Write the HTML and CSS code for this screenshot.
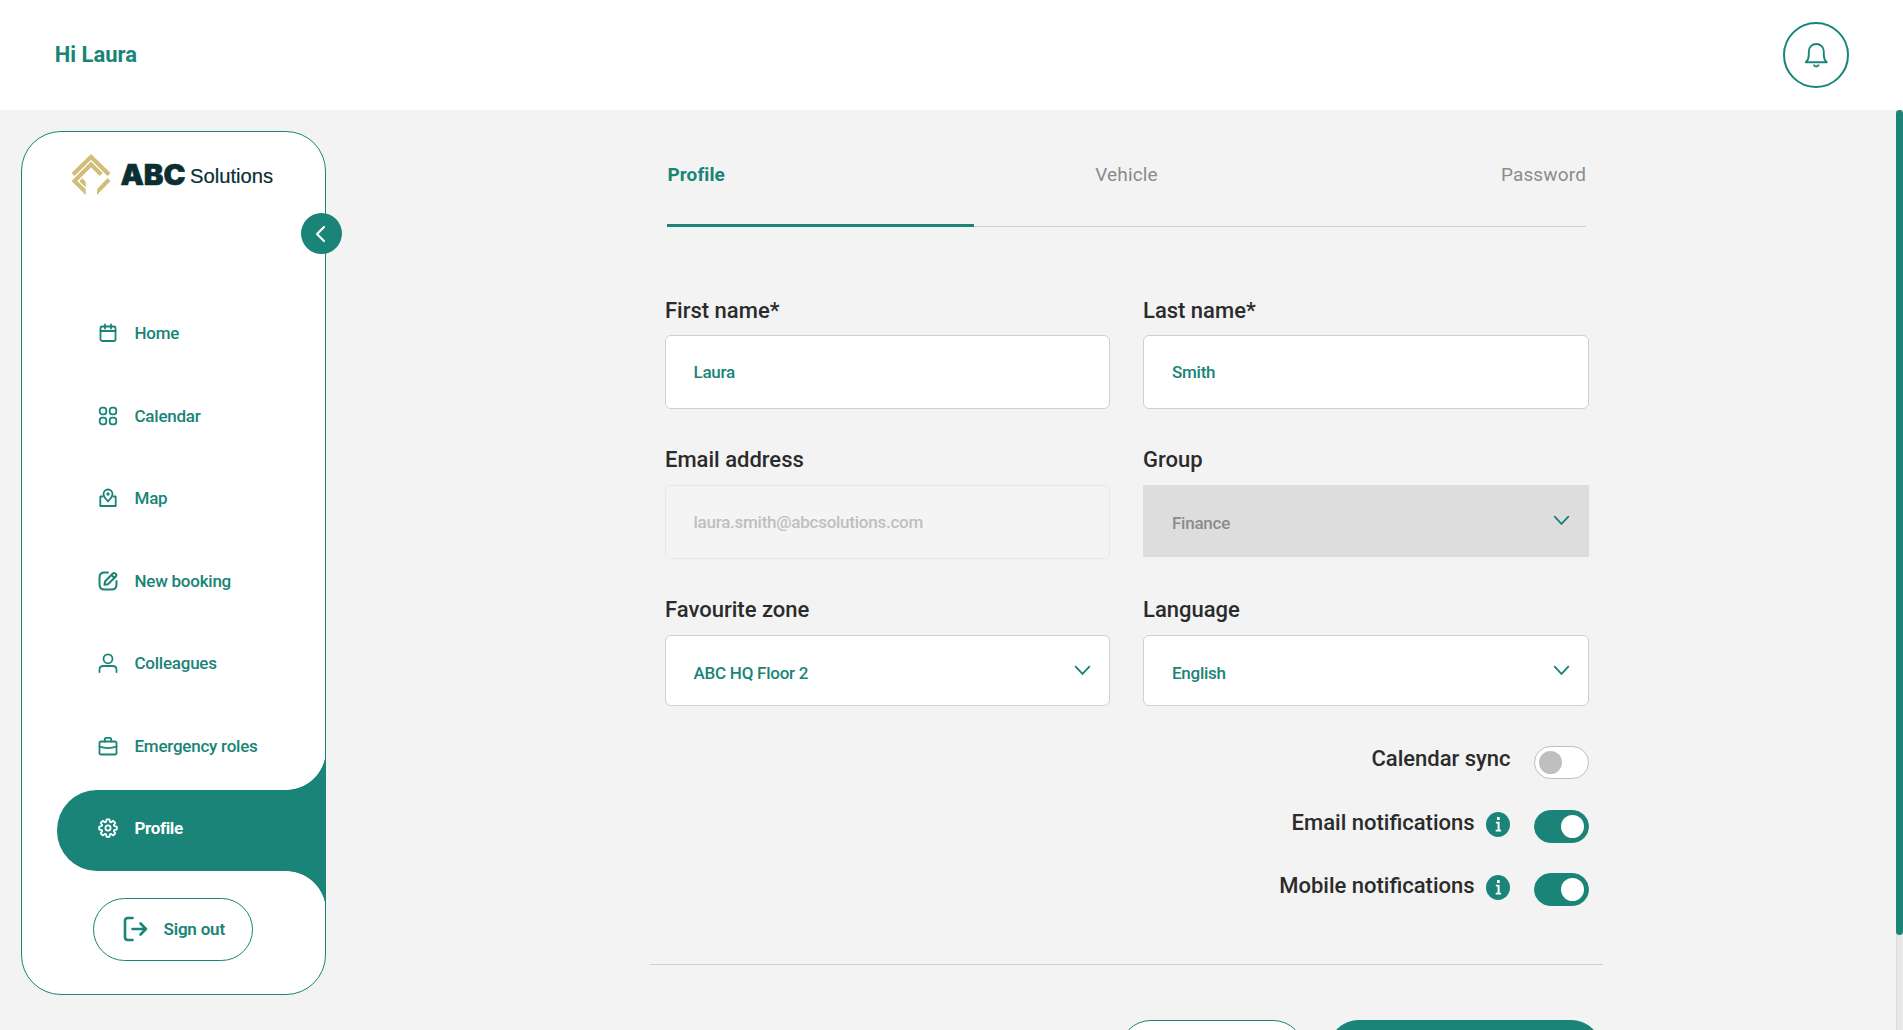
FILE: index.html
```html
<!DOCTYPE html>
<html lang="en">
<head>
<meta charset="utf-8">
<title>Profile</title>
<link rel="stylesheet" href="styles.css">
</head>
<body>
<header class="topbar">
  <h1 class="greeting">Hi Laura</h1>
  <button class="bell" aria-label="Notifications">
    <svg width="24" height="26" viewBox="0 0 24 26" fill="none" stroke="currentColor" stroke-width="1.9" stroke-linecap="round" stroke-linejoin="round"><path d="M1.8 20.2h21C20.600 18.300 19.800 16.500 19.800 13V9.500C19.800 5 16.600 2 12.300 2S4.800 5 4.800 9.500V13C4.800 16.500 4 18.300 1.800 20.200z"/><path d="M10.100 23.300q2.200 2.300 4.400 0"/></svg>
  </button>
</header>
<main class="main">
  <aside class="sidebar">
    <svg class="logo" width="206" height="44" viewBox="0 0 206 44">
      <g fill="#d0bd78">
        <path d="M20 2 39.500 21 36.500 24 20 7.800 3.500 24 .5 21z"/>
        <path d="M20 9.400 31.700 21 28.700 24 20 15.200 6.300 29 14.700 37.300V43L.5 29z"/>
        <path d="M9 28.500 11.300 26.200 14.700 30V35.500L9 30z"/>
        <path d="M36.500 26 39.500 29 26 43V37.300z"/>
      </g>
      <text class="logo-abc" x="49.500" y="32.500" textLength="65" lengthAdjust="spacingAndGlyphs">ABC</text>
      <text class="logo-name" x="119" y="31" textLength="83" lengthAdjust="spacingAndGlyphs">Solutions</text>
    </svg>
    <button class="collapse" aria-label="Collapse menu">
      <svg width="12" height="18" viewBox="0 0 12 18" fill="none" stroke="currentColor" stroke-width="2.200" stroke-linecap="round" stroke-linejoin="round"><path d="M9 2 2 9l7 7"/></svg>
    </button>
    <nav class="nav">
      <a class="nav-item"><svg class="icon" viewBox="0 0 20 20"><rect x="2.500" y="3.500" width="15" height="14.500" rx="1.800"/><path d="M2.500 8h15M7 1.500v4M13 1.500v4"/></svg>Home</a>
      <a class="nav-item"><svg class="icon" viewBox="0 0 20 20"><rect x="1.700" y="1.700" width="6.600" height="6.600" rx="2.600"/><rect x="11.700" y="1.700" width="6.600" height="6.600" rx="2.600"/><rect x="1.700" y="11.700" width="6.600" height="6.600" rx="2.600"/><rect x="11.700" y="11.700" width="6.600" height="6.600" rx="2.600"/></svg>Calendar</a>
      <a class="nav-item"><svg class="icon" viewBox="0 0 20 20"><path d="M4.500 8.500H2.300V18h15.400V8.500h-2.200"/><path d="M10 13.500C7.500 10.500 5.500 8.800 5.500 6a4.500 4.500 0 0 1 9 0c0 2.800-2 4.500-4.500 7.500z"/><circle cx="10" cy="6" r=".8"/></svg>Map</a>
      <a class="nav-item"><svg class="icon icon-bold" viewBox="0 0 20 20"><path d="M10 1.600H6.500C3 1.600 1.500 3 1.500 6.500v7c0 3.500 1.500 5 5 5h7c3.500 0 5-1.500 5-5V10"/><path d="M6.500 13.800l.5-3.300 7.600-7.700c1-1 2.200-.8 3 0s1 2 0 3l-7.700 7.500zM13.500 4l2.900 2.900"/></svg>New booking</a>
      <a class="nav-item"><svg class="icon" viewBox="0 0 20 20"><circle cx="10" cy="5.800" r="4.500"/><path d="M1.500 19v-2.300c0-2.400 1.300-3.700 3.700-3.700h9.600c2.400 0 3.700 1.300 3.700 3.700V19"/></svg>Colleagues</a>
      <a class="nav-item"><svg class="icon" viewBox="0 0 20 20"><rect x="1.500" y="5.500" width="17" height="13" rx="1.800"/><path d="M6.800 5.500V3.300c0-1 .5-1.500 1.500-1.500h3.400c1 0 1.500.5 1.500 1.500v2.200M1.500 10.500c5.500 2 11.500 2 17 0"/></svg>Emergency roles</a>
      <a class="nav-item active"><svg class="icon" viewBox="0 0 20 20"><path d="M8.500 1.300h3l.4 2.500 1.200.5 2.100-1.500 2.100 2.100-1.500 2.100.5 1.200 2.500.4v3l-2.500.4-.5 1.200 1.500 2.100-2.100 2.100-2.100-1.500-1.200.5-.4 2.500h-3l-.4-2.500-1.200-.5-2.100 1.500-2.100-2.100 1.500-2.100-.5-1.200-2.500-.4v-3l2.500-.4.5-1.200-1.500-2.100 2.100-2.100 2.100 1.500 1.200-.5z"/><circle cx="10" cy="10" r="2.600"/></svg>Profile</a>
    </nav>
    <button class="signout">
      <svg width="25" height="26" viewBox="0 0 25 26" fill="none" stroke="currentColor" stroke-width="2.600" stroke-linecap="round" stroke-linejoin="round"><path d="M9.500 2H5Q2 2 2 5v16q0 3 3 3h4.500M9.500 13H23M17.500 7.500 23 13l-5.500 5.500"/></svg>
      Sign out
    </button>
  </aside>
  <section class="content">
    <div class="tabs">
      <a class="tab selected">Profile</a>
      <a class="tab">Vehicle</a>
      <a class="tab">Password</a>
    </div>
    <form class="form">
      <label class="field first">First name*<span class="box">Laura</span></label>
      <label class="field first">Last name*<span class="box">Smith</span></label>
      <label class="field">Email address<span class="box disabled">laura.smith@abcsolutions.com</span></label>
      <label class="field">Group<span class="box select locked">Finance<svg class="chevron" viewBox="0 0 17 11"><path d="M1.200 1.200l7.300 7.700 7.300-7.700"/></svg></span></label>
      <label class="field">Favourite zone<span class="box select">ABC HQ Floor 2<svg class="chevron" viewBox="0 0 17 11"><path d="M1.200 1.200l7.300 7.700 7.300-7.700"/></svg></span></label>
      <label class="field">Language<span class="box select">English<svg class="chevron" viewBox="0 0 17 11"><path d="M1.200 1.200l7.300 7.700 7.300-7.700"/></svg></span></label>
    </form>
    <div class="switches">
      <div class="switch-row"><span class="switch-label">Calendar sync</span><span class="switch"></span></div>
      <div class="switch-row"><span class="switch-label">Email notifications</span><svg class="info" viewBox="0 0 24 25"><ellipse cx="12" cy="12.500" rx="12" ry="12.500"/><path d="M11 5h2.700v3H11zM9.900 9.800h3.700v7.900h1.500v1.800H9.700v-1.800h1.900v-6.100H9.900z"/></svg><span class="switch on"></span></div>
      <div class="switch-row"><span class="switch-label">Mobile notifications</span><svg class="info" viewBox="0 0 24 25"><ellipse cx="12" cy="12.500" rx="12" ry="12.500"/><path d="M11 5h2.700v3H11zM9.900 9.800h3.700v7.900h1.500v1.800H9.700v-1.800h1.900v-6.100H9.900z"/></svg><span class="switch on"></span></div>
    </div>
    <div class="actions">
      <button class="action"></button>
      <button class="action primary"></button>
    </div>
  </section>
  <div class="scrollbar"><div class="thumb"></div></div>
</main>
</body>
</html>
```
FILE: styles.css
```css
:root { --green: #198477; --line: #d0d0d0; }
* { box-sizing: border-box; }
body { margin: 0; height: 1030px; overflow: hidden; background: #f3f3f3; font-family: Roboto, "Liberation Sans", sans-serif; color: #2b2b2b; }
button { font: inherit; padding: 0; background: none; }
svg { display: block; flex: none; }

.topbar { height: 110px; background: #fff; display: flex; align-items: center; justify-content: space-between; padding: 0 54px; }
.greeting { margin: 0 0 0 .7px; font-size: 22px; font-weight: 700; line-height: 30px; color: var(--green); }
.bell { width: 66px; height: 66px; border: 2px solid var(--green); border-radius: 50%; color: var(--green); display: flex; align-items: center; justify-content: center; }

.main { display: flex; height: 920px; overflow: hidden; }
.sidebar { position: relative; flex: none; width: 305px; height: 864px; margin: 21px 0 0 21px; border: 1px solid var(--green); border-radius: 40px; background: #fff; display: flex; flex-direction: column; }
.logo { margin: 20px 0 0 49px; }
.logo-abc { font: 900 28px Inter, sans-serif; fill: #0b2e33; stroke: #0b2e33; stroke-width: .6px; }
.logo-name { font: 20.500px "Liberation Sans", sans-serif; fill: #0b2e33; stroke: #0b2e33; stroke-width: .2px; }
.collapse { position: absolute; right: -17px; top: 81px; width: 41px; height: 41px; border: 0; border-radius: 50%; background: var(--green); color: #fff; display: flex; align-items: center; justify-content: center; padding: 0 2px 0 0; }
.nav { display: flex; flex-direction: column; gap: 1.600px; margin: 98.500px 0 0 35px; }
.nav-item { position: relative; height: 81px; display: flex; align-items: center; gap: 16.500px; padding: 0 0 4px 41px; font-size: 17px; font-weight: 500; letter-spacing: -.24px; color: var(--green); }
.icon { width: 20px; height: 20px; fill: none; stroke: currentColor; stroke-width: 1.800; stroke-linecap: round; stroke-linejoin: round; }
.icon-bold { stroke-width: 2; }
.active { background: var(--green); color: #fff; border-radius: 40px 0 0 40px; font-weight: 700; letter-spacing: -.35px; padding-bottom: 5px; }
.active::before, .active::after { content: ""; position: absolute; right: 0; width: 39px; height: 40px; }
.active::before { bottom: 100%; background: radial-gradient(circle at 0 0, transparent 39.500px, var(--green) 40.200px); }
.active::after { top: 100%; background: radial-gradient(circle at 0 100%, transparent 39.500px, var(--green) 40.200px); }
.signout { position: relative; width: 160px; height: 63px; margin: 26.500px 0 0 71px; border: 1px solid var(--green); border-radius: 32px; display: flex; align-items: center; gap: 15.500px; padding-left: 29px; font-size: 17px; font-weight: 600; letter-spacing: -.2px; color: var(--green); }

.content { flex: none; width: 953px; margin-left: 324px; }
.tabs { position: relative; height: 117px; margin: 0 17px; border-bottom: 1px solid var(--line); display: grid; grid-template-columns: repeat(3, 1fr); padding-top: 50px; font-size: 19px; line-height: 30px; letter-spacing: .15px; color: #8b8b8b; text-align: center; }
.tabs::after { content: ""; position: absolute; left: 0; bottom: -1px; width: 307px; height: 3px; background: var(--green); }
.tab:first-child { text-align: left; }
.tab:last-child { text-align: right; }
.selected { color: var(--green); font-weight: 700; letter-spacing: .1px; padding-left: .5px; }

.form { display: grid; grid-template-columns: 445px 446px; column-gap: 33px; grid-auto-rows: 150px; margin: 68px 14px 0 15px; }
.field { display: flex; flex-direction: column; gap: 10px; font-size: 22px; font-weight: 500; line-height: 30px; }
.first { padding-top: 1px; gap: 9px; }
.box { height: 74px; padding: 0 18px 0 27.500px; border: 1px solid var(--line); border-radius: 6px; background: #fff; display: flex; align-items: center; justify-content: space-between; font-size: 17px; font-weight: 500; letter-spacing: -.25px; color: var(--green); }
.field:nth-child(even) .box { padding-left: 28px; }
.disabled { background: #f4f4f4; border-color: #e7e7e7; color: #bfbfbf; }
.select { height: 71px; padding-top: 4px; }
.locked { height: 72px; background: #ddd; border-color: #ddd; border-radius: 0; color: #8b8b8b; }
.chevron { width: 17px; height: 11px; margin-bottom: 5px; fill: none; stroke: var(--green); stroke-width: 1.800; }

.switches { display: flex; flex-direction: column; gap: 30.500px; padding: 1px 14px 58px 0; border-bottom: 1px solid var(--line); }
.switch-row { height: 33px; display: flex; justify-content: flex-end; align-items: flex-start; font-size: 22px; font-weight: 500; line-height: 26px; }
.switch-label { margin-right: -.6px; }
.info { width: 24px; height: 25px; margin: 2px 0 0 12px; fill: var(--green); }
.info path { fill: #fff; }
.switch { width: 55px; height: 33px; margin-left: 24px; padding: 4px; border: 1px solid #bfbfbf; border-radius: 17px; background: #fff; display: flex; }
.switch::before { content: ""; width: 23px; height: 23px; border-radius: 50%; background: #bfbfbf; }
.on { background: var(--green); border-color: var(--green); justify-content: flex-end; }
.on::before { background: #fff; }
.actions { display: flex; justify-content: flex-end; gap: 22px; padding-top: 55px; }
.action { width: 186px; height: 64px; border: 1px solid var(--green); border-radius: 32px; background: #fff; }
.primary { width: 276px; background: var(--green); }

.scrollbar { flex: none; width: 7px; margin-left: auto; background: #e7e7e7; border-left: 1px solid #dcdcdc; }
.thumb { width: 7px; height: 825px; margin-left: -1px; border-radius: 4px; background: var(--green); }
```
